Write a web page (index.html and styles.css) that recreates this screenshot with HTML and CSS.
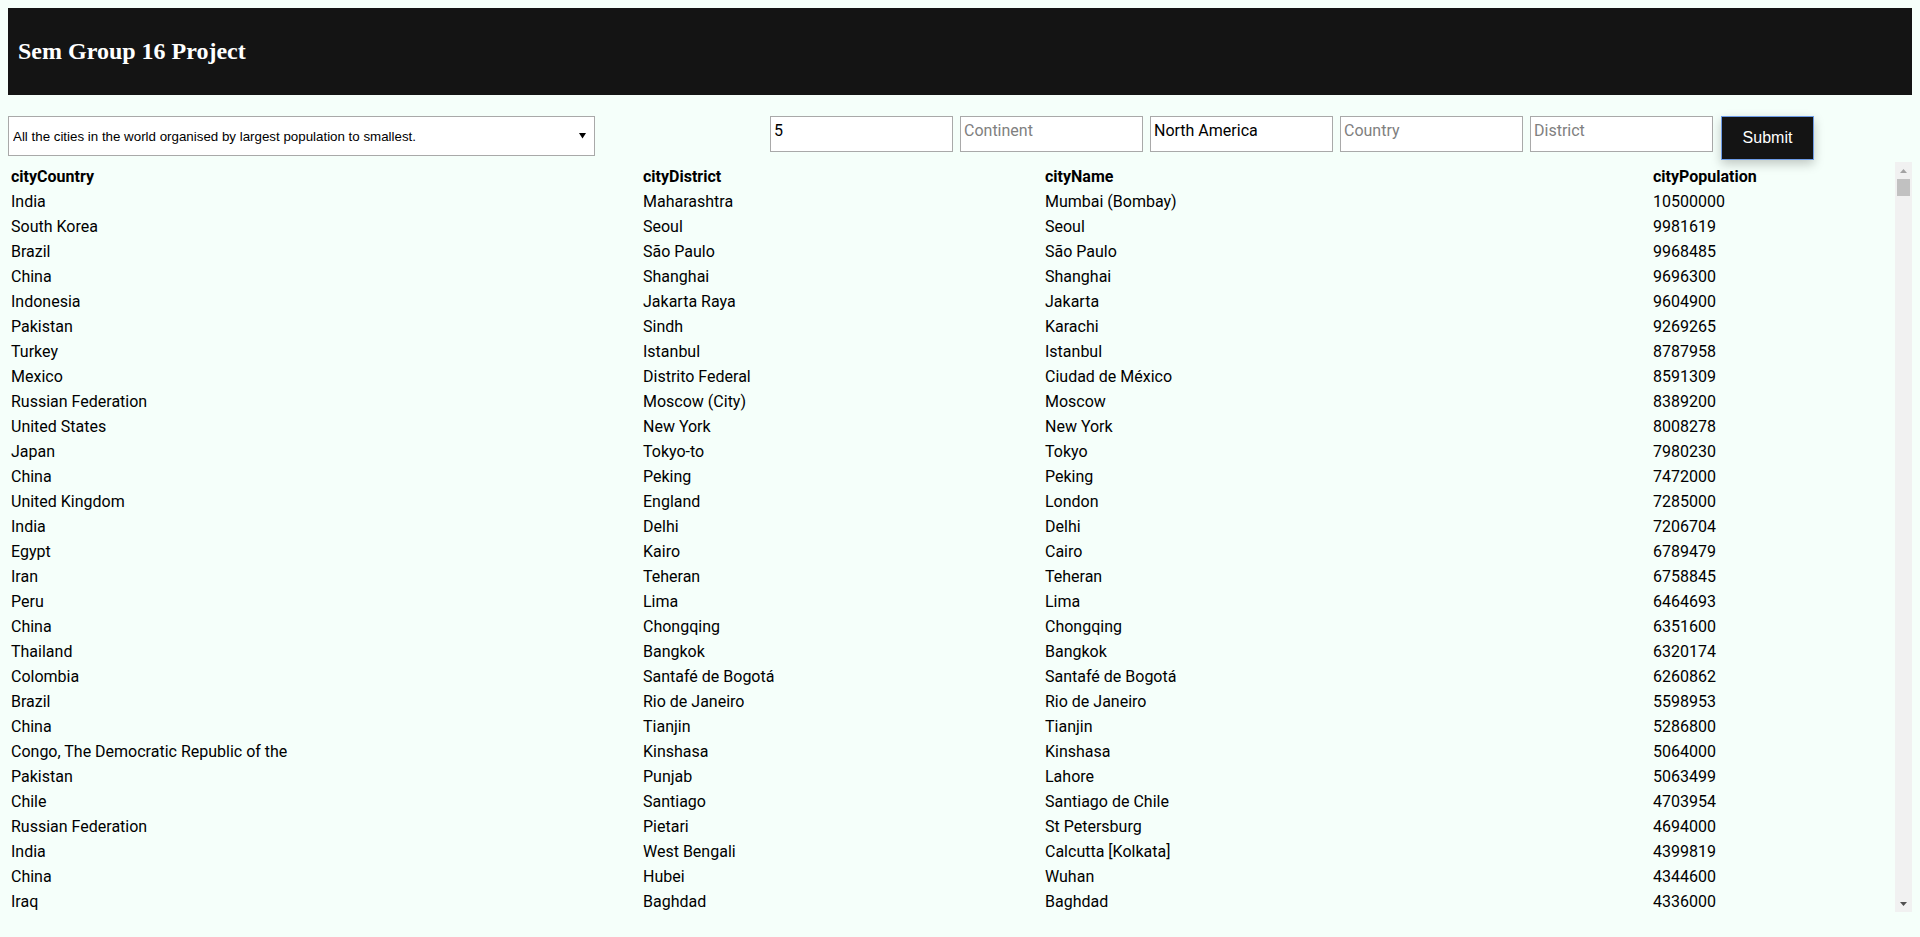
FILE: index.html
```html
<!DOCTYPE html>
<html lang="en">
<head>
<meta charset="utf-8">
<title>Sem Group 16 Project</title>
<link rel="stylesheet" href="styles.css">
</head>
<body>
<header class="topbar">
  <h1 class="title">Sem Group 16 Project</h1>
</header>

<form class="controls">
  <div class="select-wrap">
    <select class="query-select">
      <option>All the cities in the world organised by largest population to smallest.</option>
    </select>
    <svg class="select-arrow" width="7" height="7" viewBox="0 0 7 7"><path d="M0 1h7L3.5 6.5z" fill="#000"/></svg>
  </div>
  <div class="fields">
    <input class="field" type="text" value="5">
    <input class="field" type="text" placeholder="Continent">
    <input class="field" type="text" value="North America">
    <input class="field" type="text" placeholder="Country">
    <input class="field" type="text" placeholder="District">
    <button class="submit" type="button">Submit</button>
  </div>
</form>

<div class="table-wrap">
  <div class="table-pane">
    <table class="cities">
      <colgroup>
        <col class="c-country"><col class="c-district"><col class="c-name"><col>
      </colgroup>
      <thead>
        <tr><th>cityCountry</th><th>cityDistrict</th><th>cityName</th><th>cityPopulation</th></tr>
      </thead>
      <tbody>
        <tr><td>India</td><td>Maharashtra</td><td>Mumbai (Bombay)</td><td>10500000</td></tr>
        <tr><td>South Korea</td><td>Seoul</td><td>Seoul</td><td>9981619</td></tr>
        <tr><td>Brazil</td><td>São Paulo</td><td>São Paulo</td><td>9968485</td></tr>
        <tr><td>China</td><td>Shanghai</td><td>Shanghai</td><td>9696300</td></tr>
        <tr><td>Indonesia</td><td>Jakarta Raya</td><td>Jakarta</td><td>9604900</td></tr>
        <tr><td>Pakistan</td><td>Sindh</td><td>Karachi</td><td>9269265</td></tr>
        <tr><td>Turkey</td><td>Istanbul</td><td>Istanbul</td><td>8787958</td></tr>
        <tr><td>Mexico</td><td>Distrito Federal</td><td>Ciudad de México</td><td>8591309</td></tr>
        <tr><td>Russian Federation</td><td>Moscow (City)</td><td>Moscow</td><td>8389200</td></tr>
        <tr><td>United States</td><td>New York</td><td>New York</td><td>8008278</td></tr>
        <tr><td>Japan</td><td>Tokyo-to</td><td>Tokyo</td><td>7980230</td></tr>
        <tr><td>China</td><td>Peking</td><td>Peking</td><td>7472000</td></tr>
        <tr><td>United Kingdom</td><td>England</td><td>London</td><td>7285000</td></tr>
        <tr><td>India</td><td>Delhi</td><td>Delhi</td><td>7206704</td></tr>
        <tr><td>Egypt</td><td>Kairo</td><td>Cairo</td><td>6789479</td></tr>
        <tr><td>Iran</td><td>Teheran</td><td>Teheran</td><td>6758845</td></tr>
        <tr><td>Peru</td><td>Lima</td><td>Lima</td><td>6464693</td></tr>
        <tr><td>China</td><td>Chongqing</td><td>Chongqing</td><td>6351600</td></tr>
        <tr><td>Thailand</td><td>Bangkok</td><td>Bangkok</td><td>6320174</td></tr>
        <tr><td>Colombia</td><td>Santafé de Bogotá</td><td>Santafé de Bogotá</td><td>6260862</td></tr>
        <tr><td>Brazil</td><td>Rio de Janeiro</td><td>Rio de Janeiro</td><td>5598953</td></tr>
        <tr><td>China</td><td>Tianjin</td><td>Tianjin</td><td>5286800</td></tr>
        <tr><td>Congo, The Democratic Republic of the</td><td>Kinshasa</td><td>Kinshasa</td><td>5064000</td></tr>
        <tr><td>Pakistan</td><td>Punjab</td><td>Lahore</td><td>5063499</td></tr>
        <tr><td>Chile</td><td>Santiago</td><td>Santiago de Chile</td><td>4703954</td></tr>
        <tr><td>Russian Federation</td><td>Pietari</td><td>St Petersburg</td><td>4694000</td></tr>
        <tr><td>India</td><td>West Bengali</td><td>Calcutta [Kolkata]</td><td>4399819</td></tr>
        <tr><td>China</td><td>Hubei</td><td>Wuhan</td><td>4344600</td></tr>
        <tr><td>Iraq</td><td>Baghdad</td><td>Baghdad</td><td>4336000</td></tr>
      </tbody>
    </table>
  </div>
  <div class="scroll-rail" aria-hidden="true">
    <div class="rail-btn">
      <svg width="7" height="4" viewBox="0 0 7 4"><path d="M3.5 0L7 4H0z" fill="#a3a3a3"/></svg>
    </div>
    <div class="rail-track">
      <div class="rail-thumb"></div>
    </div>
    <div class="rail-btn">
      <svg width="7" height="4" viewBox="0 0 7 4"><path d="M0 0h7L3.5 4z" fill="#505050"/></svg>
    </div>
  </div>
</div>
</body>
</html>
```
FILE: styles.css
```css
html, body {
  background: #f5fffa;
}
body {
  margin: 8px;
  font-family: Roboto, "Liberation Sans", sans-serif;
  color: #000;
}

.topbar {
  height: 87px;
  background: #141414;
  display: flex;
  align-items: center;
  padding-left: 10px;
}
.title {
  margin: 0;
  font-family: "Liberation Serif", "Times New Roman", serif;
  font-weight: bold;
  font-size: 24px;
  color: #fff;
}

.controls {
  margin: 21px 0 0;
  display: flex;
  align-items: flex-start;
}
.select-wrap {
  position: relative;
  width: 587px;
  height: 40px;
}
.query-select {
  -webkit-appearance: none;
  appearance: none;
  box-sizing: border-box;
  width: 100%;
  height: 40px;
  margin: 0;
  padding: 0 20px 0 4px;
  border: 1px solid #a9a9a9;
  border-radius: 0;
  background: #fff;
  font-family: "Liberation Sans", Arial, sans-serif;
  font-size: 13.333px;
  color: #000;
}
.select-arrow {
  position: absolute;
  right: 9px;
  top: 16px;
}

.fields {
  margin-left: 175px;
  display: flex;
  align-items: flex-start;
  gap: 7px;
}
.field {
  box-sizing: border-box;
  width: 183px;
  height: 36px;
  margin: 0;
  padding: 2px 3px 10px;
  border: 1px solid #a9a9a9;
  border-radius: 0;
  background: #fff;
  font-family: Roboto, "Liberation Sans", sans-serif;
  font-size: 16px;
  color: #000;
  outline: none;
}
.field::placeholder {
  color: #808080;
}
.submit {
  box-sizing: border-box;
  margin-left: 1px;
  width: 93px;
  height: 44px;
  border: 1px solid #6d9be6;
  border-radius: 0;
  background: #141414;
  color: #fff;
  font-family: "Liberation Sans", Arial, sans-serif;
  font-size: 16px;
  box-shadow: 0 4px 10px rgba(0, 0, 0, 0.22);
  cursor: pointer;
}

.table-wrap {
  margin-top: 2px;
  height: 750px;
  display: flex;
}
.table-pane {
  flex: 1;
  min-width: 0;
  overflow-y: auto;
  scrollbar-width: none;
  padding-top: 2px;
  box-sizing: border-box;
}
.table-pane::-webkit-scrollbar {
  display: none;
}

.scroll-rail {
  width: 17px;
  flex: none;
  background: #f1f1f1;
  display: flex;
  flex-direction: column;
}
.rail-btn {
  height: 17px;
  flex: none;
  display: flex;
  align-items: center;
  justify-content: center;
}
.rail-track {
  flex: 1;
  padding: 0 2px;
}
.rail-thumb {
  height: 17px;
  background: #c1c1c1;
}

.cities {
  width: 100%;
  table-layout: fixed;
  border-collapse: collapse;
  font-size: 16px;
}
.c-country { width: 632px; }
.c-district { width: 402px; }
.c-name { width: 608px; }
.cities th,
.cities td {
  height: 25px;
  padding: 0 3px;
  text-align: left;
  white-space: nowrap;
  line-height: 25px;
}
.cities th {
  font-weight: bold;
}
```
